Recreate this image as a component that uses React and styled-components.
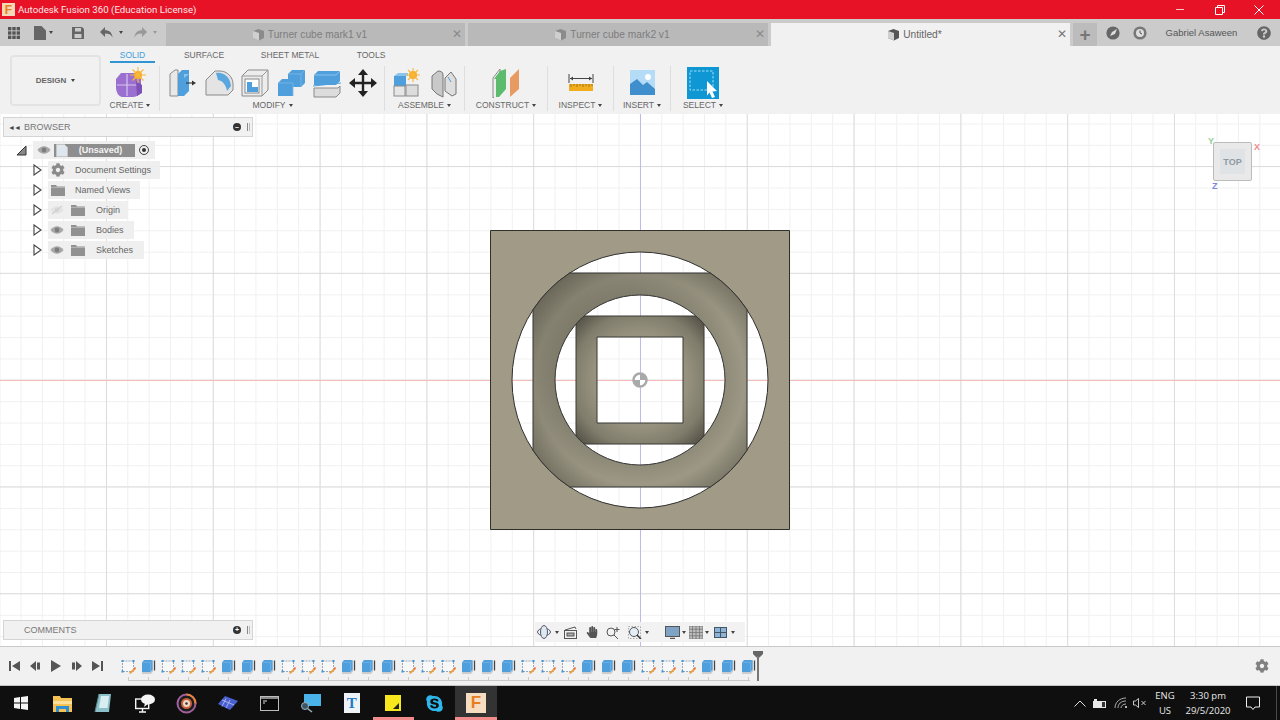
import React from 'react'
import styled, { createGlobalStyle } from 'styled-components'
import { FaCog, FaSkype, FaHandPaper, FaQuestionCircle } from 'react-icons/fa'

const GlobalStyle = createGlobalStyle`
  html, body { margin: 0; padding: 0; height: 100%; overflow: hidden; }
  body { font-family: "Liberation Sans", Arial, sans-serif; }
  #root { height: 100%; }
  svg { display: block; flex: none; }
`

const Page = styled.div`
  width: 1280px;
  height: 720px;
  display: flex;
  flex-direction: column;
  background: #fff;
  overflow: hidden;
`

/* title bar */
const TitleBar = styled.header`
  height: 19px;
  flex: none;
  display: flex;
  align-items: center;
  padding-right: 2px;
  background: #e81226;
  color: #fbe6e8;
  font-family: "Roboto", sans-serif;
  font-size: 9.7px;
`
const AppLogo = styled.span`
  width: ${p => p.$size || 13}px;
  height: ${p => p.$size || 13}px;
  margin: ${p => (p.$size ? '0' : '0 3px 0 2px')};
  display: flex;
  align-items: center;
  justify-content: center;
  background: ${p => p.$bg || '#f6d9b8'};
  color: #e67e22;
  font: bold ${p => (p.$size ? 17 : 12)}px "Liberation Sans", sans-serif;
`
const TitleText = styled.span`
  flex: 1;
`
const WinButton = styled.span`
  width: 39px;
  display: flex;
  justify-content: center;
`

/* document tabs */
const TabBar = styled.div`
  height: 27px;
  flex: none;
  display: flex;
  align-items: flex-end;
  background: #cbcbcb;
`
const QuickBar = styled.div`
  width: 166px;
  height: 27px;
  display: flex;
  align-items: center;
`
const QuickSlot = styled.span`
  width: ${p => p.$w}px;
  display: flex;
  align-items: center;
  justify-content: center;
`
const Caret = styled.i`
  display: inline-block;
  width: 0;
  height: 0;
  flex: none;
  margin-left: ${p => p.$gap ?? 3}px;
  border-left: 2.5px solid transparent;
  border-right: 2.5px solid transparent;
  border-top: 3px solid ${p => p.$color || '#444'};
`
const Tab = styled.div`
  width: ${p => p.$w}px;
  height: 23px;
  margin-right: ${p => p.$mr}px;
  box-sizing: border-box;
  padding-right: 12px;
  position: relative;
  display: flex;
  align-items: center;
  justify-content: center;
  gap: 3px;
  background: ${p => (p.$active ? '#f1f1f1' : '#b9b9b9')};
  color: ${p => (p.$active ? '#666' : '#7d7d7d')};
  font-size: 10.2px;
`
const TabClose = styled.span`
  position: absolute;
  right: 3px;
  top: 4px;
  font-size: 12px;
  color: ${p => (p.$active ? '#777' : '#8a8a8a')};
`
const PlusTab = styled.div`
  width: 24px;
  height: 23px;
  margin-left: 3px;
  display: flex;
  align-items: center;
  justify-content: center;
  background: #bcbcbc;
  color: #777;
  font-size: 19px;
  font-weight: bold;
`
const TopIcon = styled.span`
  width: 27px;
  height: 27px;
  display: flex;
  align-items: center;
  justify-content: center;
  margin-left: ${p => p.$ml || 0}px;
`
const UserName = styled.span`
  width: 97px;
  height: 27px;
  display: flex;
  align-items: center;
  justify-content: center;
  color: #555;
  font-size: 9.5px;
`

/* ribbon */
const Ribbon = styled.div`
  height: 68px;
  flex: none;
  display: flex;
  background: #f1f1f1;
  box-sizing: border-box;
  padding: 0 0 0 10px;
`
const DesignButton = styled.div`
  width: 91px;
  height: 51px;
  margin-top: 9px;
  box-sizing: border-box;
  display: flex;
  align-items: center;
  justify-content: center;
  border: 2px solid #e3e3e3;
  border-radius: 4px;
  color: #666;
  font-size: 8px;
  font-weight: bold;
`
const RibbonBody = styled.div`
  margin-left: 9px;
  display: flex;
  flex-direction: column;
`
const RibbonTabs = styled.div`
  height: 17px;
  margin-top: 3px;
  display: flex;
`
const RibbonTab = styled.span`
  width: ${p => p.$w}px;
  height: 14px;
  box-sizing: border-box;
  text-align: center;
  font-size: 8.5px;
  line-height: 12px;
  color: ${p => (p.$active ? '#3f9fd8' : '#666')};
  border-bottom: ${p => (p.$active ? '2px solid #2f95d3' : 'none')};
`
const RibbonGroups = styled.div`
  display: flex;
  height: 45px;
`
const Group = styled.div`
  width: ${p => p.$w}px;
  box-sizing: border-box;
  padding: 0 ${p => p.$pr || 0}px 0 ${p => p.$pl || 0}px;
  display: flex;
  flex-direction: column;
  align-items: center;
  border-right: ${p => (p.$last ? 'none' : '1px solid #dedede')};
`
const GroupIcons = styled.div`
  height: 33px;
  display: flex;
  align-items: center;
  gap: ${p => p.$gap || 0}px;
`
const GroupLabel = styled.span`
  display: flex;
  align-items: center;
  margin-top: 1px;
  color: #666;
  font-size: 8.5px;
  line-height: 11px;
`

/* canvas */
const Viewport = styled.main`
  flex: 1;
  position: relative;
  background-color: #fff;
  background-image:
    linear-gradient(#f6bcbc, #f6bcbc),
    linear-gradient(#bcbcec, #bcbcec),
    linear-gradient(to right, #dcdcdc 1px, transparent 1px),
    linear-gradient(to bottom, #dcdcdc 1px, transparent 1px),
    linear-gradient(to right, #f0f0f0 1px, transparent 1px),
    linear-gradient(to bottom, #f0f0f0 1px, transparent 1px);
  background-repeat: no-repeat, no-repeat, repeat, repeat, repeat, repeat;
  background-size: 100% 1px, 1px 100%, 106.8px 106.8px, 106.8px 106.8px, 21.36px 21.36px, 21.36px 21.36px;
  background-position: 0 266px, 640px 0, 106px 0, 0 52px, 20.5px 0, 0 9.5px;
`
const Model = styled.svg`
  position: absolute;
  left: 490px;
  top: 116px;
  overflow: visible;
`
const SidePanels = styled.div`
  position: absolute;
  left: 3px;
  top: 3px;
  bottom: 6px;
  width: 250px;
  display: flex;
  flex-direction: column;
  justify-content: space-between;
`
const PanelHeader = styled.div`
  height: 20px;
  box-sizing: border-box;
  display: flex;
  align-items: center;
  background: #f1f1f1;
  border: 1px solid #d4d4d4;
  color: #777;
  font-size: 9px;
`
const PanelArrows = styled.span`
  width: 20px;
  text-align: center;
  font-size: 7px;
  letter-spacing: -1px;
  color: #444;
`
const PanelTitle = styled.span`
  flex: 1;
`
const PanelDot = styled.span`
  width: 8px;
  height: 8px;
  border-radius: 50%;
  background: #333;
  color: #fff;
  display: flex;
  align-items: center;
  justify-content: center;
  font-size: 7px;
  line-height: 8px;
  font-weight: bold;
`
const PanelGrip = styled.span`
  width: 1px;
  height: 8px;
  margin: 0 2px 0 6px;
  border-left: 1px solid #888;
  border-right: 1px solid #bbb;
`
const Tree = styled.div`
  display: flex;
  flex-direction: column;
  margin-top: 3px;
`
const TreeRow = styled.div`
  height: 20px;
  display: flex;
  align-items: center;
  padding-left: ${p => p.$indent}px;
`
const TreeTwist = styled.span`
  width: ${p => p.$w}px;
  display: flex;
  align-items: center;
`
const TreePill = styled.div`
  height: 18px;
  width: ${p => p.$w}px;
  display: flex;
  align-items: center;
  background: rgba(238, 238, 238, 0.92);
  color: #666;
  font-size: 9px;
  white-space: nowrap;
`
const IconSlot = styled.span`
  width: ${p => p.$w}px;
  display: flex;
  justify-content: center;
  align-items: center;
`
const RootLabel = styled.div`
  width: 81px;
  height: 13px;
  display: flex;
  align-items: center;
  background: #8e8e8e;
  color: #f4f4f4;
  font-size: 9px;
  font-weight: bold;
`
const RootText = styled.span`
  flex: 1;
  text-align: center;
  padding-right: 4px;
`
const ActiveRadio = styled.span`
  width: 10px;
  height: 10px;
  margin-left: 4px;
  box-sizing: border-box;
  border: 1px solid #444;
  border-radius: 50%;
  display: flex;
  align-items: center;
  justify-content: center;
  &::before {
    content: "";
    width: 4px;
    height: 4px;
    border-radius: 50%;
    background: #333;
  }
`
const TreeLabel = styled.span`
  margin-left: ${p => p.$ml}px;
`
const ViewCube = styled.div`
  position: absolute;
  left: 1213px;
  top: 28px;
  width: 39px;
  height: 39px;
  box-sizing: border-box;
  display: flex;
  align-items: center;
  justify-content: center;
  background: #e9e9e9;
  border: 1px solid #bcbcbc;
  border-radius: 2px;
`
const CubeFace = styled.span`
  width: 25px;
  height: 25px;
  display: flex;
  align-items: center;
  justify-content: center;
  background: #dfe3e6;
  color: #8f9aa3;
  font-size: 9px;
  font-weight: bold;
`
const CubeAxis = styled.span`
  position: absolute;
  left: ${p => p.$x}px;
  top: ${p => p.$y}px;
  color: ${p => p.$color};
  font-size: 9px;
  font-weight: bold;
`
const NavBar = styled.div`
  position: absolute;
  left: 535px;
  bottom: 4px;
  width: 210px;
  height: 20px;
  display: flex;
  align-items: center;
  background: rgba(241, 241, 241, 0.95);
`
const NavItem = styled.span`
  width: ${p => p.$w}px;
  margin-left: ${p => p.$ml || 0}px;
  display: flex;
  align-items: center;
  justify-content: center;
`

/* timeline */
const Timeline = styled.div`
  height: 40px;
  flex: none;
  box-sizing: border-box;
  display: flex;
  align-items: center;
  background: #f1f1f1;
  border-top: 1px solid #c9c9c9;
  border-bottom: 1px solid #c4c4c4;
`
const Transport = styled.div`
  width: 118px;
  padding-left: 4px;
  box-sizing: border-box;
  display: flex;
`
const TransportButton = styled.span`
  width: 20.8px;
  display: flex;
  justify-content: center;
`
const Steps = styled.div`
  display: flex;
  height: 38px;
  padding-top: 1px;
  box-sizing: border-box;
`
const Step = styled.div`
  width: 20px;
  height: 33px;
  box-sizing: border-box;
  position: relative;
  padding-top: 11px;
  display: flex;
  justify-content: center;
  &::before {
    content: "";
    position: absolute;
    left: 0;
    right: 0;
    bottom: 0;
    height: 1px;
    background: #c9c9c9;
  }
  &:first-child::before { left: 50%; }
  &:last-child::before { right: 40%; }
  &::after {
    content: "";
    position: absolute;
    left: 50%;
    bottom: 0;
    width: 1px;
    height: 4px;
    background: #c9c9c9;
  }
`
const Marker = styled.svg`
  margin-left: -5px;
`
const TimelineGear = styled.span`
  margin-left: auto;
  margin-right: 11px;
  color: #808080;
  display: flex;
`

/* windows taskbar */
const Taskbar = styled.footer`
  height: 34px;
  flex: none;
  display: flex;
  background: #0f0f0f;
`
const TaskSlot = styled.span`
  width: 41.4px;
  height: 34px;
  box-sizing: border-box;
  display: flex;
  align-items: center;
  justify-content: center;
  background: ${p => (p.$active ? '#333' : 'transparent')};
  border-bottom: 3px solid ${p => (p.$open ? '#f28b8b' : 'transparent')};
  padding-top: 3px;
`
const Tray = styled.div`
  margin-left: auto;
  display: flex;
  padding-right: 3px;
  color: #e8e8e8;
  font-family: "Open Sans", sans-serif;
  font-size: 9.5px;
  line-height: 15px;
`
const TraySlot = styled.span`
  width: ${p => p.$w}px;
  height: 34px;
  display: flex;
  flex-direction: column;
  align-items: center;
  justify-content: center;
  white-space: nowrap;
  border-right: ${p => (p.$edge ? '1px solid #4a4a4a' : 'none')};
  box-sizing: border-box;
`

/* icons drawn by hand */
const Cube = ({ color = '#8b8b8b' }) => (
  <svg width="13" height="13" viewBox="0 0 13 13">
    <path d="M1 3l5.500-2L12 3v7l-5 2.500L1 10z" fill={color} />
    <path d="M1 3l6 2v7.500L1 10z" fill="#cfcfcf" />
  </svg>
)
const GridIcon = () => (
  <svg width="12" height="12" viewBox="0 0 12 12" fill="#555">
    {[0, 4.3, 8.6].flatMap(y => [0, 4.3, 8.6].map(x => <rect key={x + '-' + y} x={x} y={y} width="3.4" height="3.4" />))}
  </svg>
)
const FileIcon = () => (
  <svg width="12" height="14" viewBox="0 0 12 14"><path d="M0 0h7.500L12 4.500V14H0z" fill="#666" /></svg>
)
const SaveIcon = () => (
  <svg width="12" height="12" viewBox="0 0 12 12">
    <path d="M0 0h10l2 2v10H0z" fill="#666" />
    <rect x="3" y="1" width="6" height="3.500" fill="#cbcbcb" />
    <rect x="2.500" y="7" width="7" height="4" fill="#cbcbcb" />
  </svg>
)
const UndoIcon = () => (
  <svg width="13" height="11" viewBox="0 0 13 11">
    <path d="M5 0v3.200c4.500 0 7.200 2.500 7.500 7.300C11 7.600 8.800 6.600 5 6.600V10L0 5z" fill="#666" />
  </svg>
)
const RedoIcon = () => (
  <svg width="13" height="11" viewBox="0 0 13 11">
    <path d="M8 0v3.200C3.500 3.200.8 5.700.5 10.500 2 7.600 4.200 6.600 8 6.600V10l5-5z" fill="#999" />
  </svg>
)
const RoundIcon = ({ children, bg = '#666' }) => (
  <svg width="14" height="14" viewBox="0 0 14 14">
    <circle cx="7" cy="7" r="6.600" fill={bg} />
    {children}
  </svg>
)
const Eye = ({ off }) => (
  <svg width="14" height="10" viewBox="0 0 14 10">
    <path d="M0.500 5C4 0 10 0 13.500 5 10 10 4 10 .5 5z" fill={off ? '#e4e4e4' : '#a8a8a8'} />
    <circle cx="7" cy="5" r="2.400" fill={off ? '#d8d8d8' : '#7d7d7d'} />
    {off && <path d="M2 9L12 1" stroke="#d0d0d0" strokeWidth="1.200" />}
  </svg>
)
const Folder = () => (
  <svg width="14" height="11" viewBox="0 0 14 11">
    <path d="M0 0h5l1 1.600h8V11H0z" fill="#919191" />
    <path d="M0 2.400h14" stroke="#c9c9c9" strokeWidth=".7" />
  </svg>
)
const Twist = () => (
  <svg width="9" height="12" viewBox="0 0 9 12">
    <path d="M1 1l7 5-7 5z" fill="#fff" stroke="#444" strokeWidth="1.100" />
  </svg>
)
const DocIcon = () => (
  <svg width="12" height="13" viewBox="0 0 12 13">
    <path d="M.5.5h8l3 3v9H.5z" fill="#dfe7ee" stroke="#c5c5c5" />
  </svg>
)

const CreateIcon = () => (
  <svg width="32" height="32" viewBox="0 0 32 32">
    <path d="M7 6h15l5 6v13c-3 5-7 5-11 5H8c-4-1-6-5-6-10v-8z" fill="#9a6fd0" />
    <path d="M3 18h21M13 7v22" stroke="#d8c6ee" strokeWidth="1.200" />
    <path d="M22 14l6 4v8l-5 3z" fill="#7d51b5" />
    <circle cx="24" cy="8" r="4" fill="#f7a823" />
    <path d="M24 0v16M16 8h16M18.500 2.500l11 11M29.500 2.500l-11 11" stroke="#f7b93a" strokeWidth="1.100" />
  </svg>
)
const PressPull = () => (
  <svg width="30" height="30" viewBox="0 0 30 30">
    <path d="M2 6l5-4h3v26H2z" fill="#e8e8e8" stroke="#8a8a8a" />
    <path d="M10 28V6l4-4h7v21l-5 5z" fill="#4f9fdc" />
    <path d="M16 6h5l-5 4z" fill="#8cc4ec" />
    <path d="M18 15h7" stroke="#333" strokeWidth="1.100" />
    <path d="M24 12.500l4 2.500-4 2.500z" fill="#333" />
  </svg>
)
const FilletIcon = () => (
  <svg width="30" height="30" viewBox="0 0 30 30">
    <path d="M2 27V12l9-9h5c7 0 13 6 13 13v6l-5 5z" fill="#e4e4e4" stroke="#8a8a8a" />
    <path d="M12 5c8-1 14 4 15 13l-4 5c-1-6-4-10-9-11z" fill="#5aa6df" />
  </svg>
)
const ShellIcon = () => (
  <svg width="30" height="30" viewBox="0 0 30 30">
    <path d="M2 8l6-6h20v20l-6 6H2z" fill="#ececec" stroke="#8a8a8a" />
    <path d="M2 8h20v20M22 8l6-6" fill="none" stroke="#9a9a9a" />
    <rect x="5" y="11" width="14" height="14" fill="#fff" stroke="#888" />
    <path d="M7 24V14h5v5h6v5z" fill="#4f9fdc" />
  </svg>
)
const CombineIcon = () => (
  <svg width="30" height="30" viewBox="0 0 30 30">
    <path d="M12 6l4-4h13v13l-4 4h-8v9l-1 0H2V15l4-4h6z" fill="#4f9fdc" />
    <path d="M12 6h13v13M25 6l4-4" fill="none" stroke="#7db8e6" strokeWidth=".8" />
    <path d="M2 15h15v13" fill="none" stroke="#7db8e6" strokeWidth=".8" />
  </svg>
)
const SplitIcon = () => (
  <svg width="30" height="30" viewBox="0 0 30 30">
    <path d="M2 7l4-4h22v10l-4 4H2z" fill="#4f9fdc" />
    <path d="M2 7h22l4-4" fill="none" stroke="#8cc4ec" />
    <path d="M1 18l28-3" stroke="#4f9fdc" strokeWidth="1" />
    <path d="M2 20h24l2-2v7l-4 4H2z" fill="#dcdcdc" stroke="#8a8a8a" />
  </svg>
)
const MoveIcon = () => (
  <svg width="30" height="30" viewBox="0 0 30 30" fill="#222">
    <path d="M15 1l5 6h-3.800v6.800H23V10l6 5-6 5v-3.800h-6.800V23H20l-5 6-5-6h3.800v-6.800H7V20l-6-5 6-5v3.800h6.800V7H10z" />
  </svg>
)
const NewComponent = () => (
  <svg width="30" height="30" viewBox="0 0 30 30">
    <rect x="2" y="8" width="12" height="10" fill="#4f9fdc" />
    <path d="M2 8l4-3h10v3z" fill="#8cc4ec" />
    <rect x="2" y="18" width="11" height="10" fill="#e6e6e6" stroke="#8a8a8a" />
    <rect x="14" y="17" width="12" height="11" fill="#dcdcdc" stroke="#8a8a8a" />
    <circle cx="21" cy="7" r="4" fill="#f7a823" />
    <path d="M21 0v14M14 7h14M16 2l10 10M26 2L16 12" stroke="#f7b93a" strokeWidth="1.100" />
  </svg>
)
const JointIcon = () => (
  <svg width="28" height="30" viewBox="0 0 28 30">
    <path d="M2 8l6-5c3 0 5 1 5 4v22l-6-3-5-5z" fill="#c9c9c9" stroke="#777" />
    <path d="M15 10l6-6 5 7v15l-4 2-7-5z" fill="#dedede" stroke="#777" />
    <path d="M18 9l3 5" stroke="#4f9fdc" />
  </svg>
)
const ConstructIcon = () => (
  <svg width="30" height="32" viewBox="0 0 30 32">
    <path d="M2 11l7-9v21l-7 8z" fill="#f1f1f1" stroke="#8a8a8a" />
    <path d="M3 30V12l6-8 6-2v20l-7 8z" fill="#5cbb6c" />
    <path d="M3 30V12h2v18z" fill="#efefef" />
    <path d="M19 30V11l9-9v20z" fill="#e89a63" />
  </svg>
)
const InspectIcon = () => (
  <svg width="26" height="22" viewBox="0 0 26 22">
    <path d="M1 2v9M25 2v9" stroke="#444" />
    <path d="M2 6.500h22" stroke="#444" />
    <path d="M2 6.500l3-2v4zM24 6.500l-3-2v4z" fill="#444" />
    <rect x="1" y="12" width="24" height="7" fill="#f2ad1e" />
    <path d="M3 12v3M6 12v2M9 12v3M12 12v2M15 12v3M18 12v2M21 12v3M24 12v2" stroke="#8a6a1c" strokeWidth=".8" />
  </svg>
)
const InsertIcon = () => (
  <svg width="25" height="25" viewBox="0 0 25 25">
    <rect width="25" height="25" fill="#b5dcf7" />
    <circle cx="18" cy="7" r="3" fill="#fff" />
    <path d="M0 25V14l7-5 6 6 4-3 8 7v6z" fill="#3e8fcb" />
  </svg>
)
const SelectIcon = () => (
  <svg width="32" height="32" viewBox="0 0 32 32">
    <rect width="32" height="32" fill="#0f97d4" />
    <rect x="3" y="4" width="23" height="19" fill="none" stroke="#9fe0f2" strokeDasharray="2.500 1.500" />
    <path d="M20 14l10 10-4.500.5L28 30l-3 1-2.500-5.500-2.500 3z" fill="#fff" />
  </svg>
)

const SketchStep = () => (
  <svg width="15" height="15" viewBox="0 0 15 15">
    <rect x="1.500" y="2" width="11" height="10.500" fill="#f8f8f8" stroke="#8f9fb0" strokeWidth=".9" strokeDasharray="2 1" />
    <path d="M0.500 1h2v2h-2zM11.500 1h2v2h-2zM0.500 11.500h2v2h-2z" fill="#3d93d8" />
    <path d="M8 14l5-5 1.500 1.500-5 4.500z" fill="#f0a040" />
    <path d="M12.800 9.200l1.200-1.200 1 1-1 1.500z" fill="#e25c3a" />
  </svg>
)
const BodyStep = () => (
  <svg width="15" height="15" viewBox="0 0 15 15">
    <path d="M1 5l2-3h9v10.500L10 15H1z" fill="#c9cdd0" />
    <path d="M1 3.500L3 1h8.500v9.500L9.500 13H1z" fill="#4f9fdc" />
    <path d="M1 3.500h8.500v9.500M9.500 3.500l2-2.500" fill="none" stroke="#7db8e6" strokeWidth=".6" />
    <path d="M13.500 1.500v10" stroke="#444" strokeWidth="1.300" />
  </svg>
)

const TransportIcon = ({ d }) => (
  <svg width="11" height="12" viewBox="0 0 11 12"><path d={d} fill="#555" /></svg>
)
const WinLogo = () => (
  <svg width="14" height="14" viewBox="0 0 14 14" fill="#f4f4f4">
    <path d="M0 2l6-.9V6.600H0zM7 1l7-1v6.600H7zM0 7.400h6v5.500l-6-.9zM7 7.400h7V14l-7-1z" />
  </svg>
)
const ExplorerIcon = () => (
  <svg width="19" height="17" viewBox="0 0 19 17">
    <path d="M0 1h7l1 2h11v14H0z" fill="#f5c253" />
    <path d="M0 6h19v3H0z" fill="#fbe09a" />
    <path d="M3 17v-6h13v6h-3v-3H6v3z" fill="#2f8fd0" />
  </svg>
)
const NoteIcon = () => (
  <svg width="18" height="20" viewBox="0 0 18 20">
    <path d="M5 1h12l-2 18H1z" fill="#8cc0c8" />
    <path d="M7 3h8l-1.500 12H5z" fill="#d8eef0" />
    <path d="M1 19l4-18" stroke="#5a8a92" />
  </svg>
)
const ChatMonitor = () => (
  <svg width="20" height="19" viewBox="0 0 20 19">
    <rect x=".7" y="5" width="13" height="9.500" fill="none" stroke="#f4f4f4" strokeWidth="1.400" />
    <path d="M4 18h7M7.500 14v4" stroke="#f4f4f4" strokeWidth="1.400" />
    <ellipse cx="13" cy="5.500" rx="7" ry="5" fill="#f4f4f4" />
    <path d="M10 9l-1 4 4-3z" fill="#f4f4f4" />
  </svg>
)
const DiscIcon = () => (
  <svg width="21" height="21" viewBox="0 0 21 21">
    <circle cx="10.500" cy="10.500" r="9" fill="#1c1c1c" stroke="#a0609e" strokeWidth="2" />
    <path d="M10.500 1.500a9 9 0 0 1 9 9" fill="none" stroke="#e8853a" strokeWidth="2" />
    <circle cx="10.500" cy="10.500" r="4.500" fill="#f0d9c8" stroke="#c8603a" strokeWidth="2" />
    <circle cx="10.500" cy="10.500" r="1.300" fill="#333" />
  </svg>
)
const PanelIcon = () => (
  <svg width="20" height="14" viewBox="0 0 20 14">
    <path d="M7 0l13 5-8 9L0 8z" fill="#4a5fd0" />
    <path d="M4 4l12 5M8 2.500l-4 8M12 4l-4 8" stroke="#b8c4f2" strokeWidth=".8" />
  </svg>
)
const TerminalIcon = () => (
  <svg width="19" height="15" viewBox="0 0 19 15">
    <rect x=".5" y=".5" width="18" height="14" fill="#0a0a0a" stroke="#bdbdbd" />
    <rect x="1" y="1" width="17" height="2" fill="#8a8a8a" />
    <path d="M3 5h4M3 7h2" stroke="#ddd" />
  </svg>
)
const SearchMonitor = () => (
  <svg width="21" height="20" viewBox="0 0 21 20">
    <rect x="4" y="1" width="17" height="12" fill="#49b3ea" />
    <circle cx="5" cy="13" r="3.500" fill="#3a5564" stroke="#9cb4c0" />
    <path d="M7.500 15.500L12 19" stroke="#9cb4c0" strokeWidth="1.500" />
  </svg>
)
const TDoc = styled.span`
  width: 16px;
  height: 20px;
  display: flex;
  align-items: center;
  justify-content: center;
  background: #eef3f8;
  color: #1a7bc9;
  font: bold 15px "Liberation Serif", serif;
`
const StickyIcon = () => (
  <svg width="16" height="16" viewBox="0 0 16 16">
    <rect width="16" height="16" fill="#f8e71c" />
    <path d="M8 14l6-6v6z" fill="#222" />
  </svg>
)
const TrayBattery = () => (
  <svg width="14" height="9" viewBox="0 0 14 9">
    <rect x="0" y="2" width="13" height="7" fill="#e8e8e8" />
    <rect x="1" y="0" width="3" height="2" fill="#e8e8e8" />
    <rect x="9" y="3" width="3" height="5" fill="#333" />
  </svg>
)
const TrayWifi = () => (
  <svg width="14" height="12" viewBox="0 0 14 12" fill="none" stroke="#bdbdbd" strokeWidth=".9">
    <path d="M1 11C1 5 6 1 12 1M4 11c0-4 3-7 8-7M7 11c0-2 2-4 5-4" />
    <circle cx="12" cy="10" r="1" fill="#eee" stroke="none" />
  </svg>
)
const TrayVolume = () => (
  <svg width="14" height="10" viewBox="0 0 14 10" fill="none" stroke="#dcdcdc" strokeWidth=".9">
    <path d="M.5 3h2l3-2.500v9l-3-2.500h-2zM8.500 3l4 4M12.500 3l-4 4" />
  </svg>
)

// sketch, body, then three of each all the way along
const stepKinds = Array.from({ length: 32 }, (_, i) => {
  if (i < 2) return i === 0 ? 'S' : 'B'
  return (i - 2) % 6 < 3 ? 'S' : 'B'
})

const trees = [
  { key: 'doc', w: 112, icon: <IconSlot $w={19}><FaCog size={14} color="#8a8a8a" /></IconSlot>, label: 'Document Settings', ml: 8 },
  { key: 'views', w: 92, icon: <IconSlot $w={19}><Folder /></IconSlot>, label: 'Named Views', ml: 8 },
  { key: 'origin', w: 80, off: true, label: 'Origin' },
  { key: 'bodies', w: 86, label: 'Bodies' },
  { key: 'sketches', w: 96, label: 'Sketches' },
]

const CIRCLE_OUT = 128
const CIRCLE_MID = 85
const cx = 150

// square with its corners cut by a circle of radius r
const cutSquare = (a, r) => {
  const b = Math.sqrt(r * r - a * a)
  return `M${cx - b} ${cx - a}H${cx + b}A${r} ${r} 0 0 1 ${cx + a} ${cx - b}V${cx + b}A${r} ${r} 0 0 1 ${cx + b} ${cx + a}H${cx - b}A${r} ${r} 0 0 1 ${cx - a} ${cx + b}V${cx - b}A${r} ${r} 0 0 1 ${cx - b} ${cx - a}Z`
}
const circlePath = r => `M${cx - r} ${cx}A${r} ${r} 0 1 0 ${cx + r} ${cx}A${r} ${r} 0 1 0 ${cx - r} ${cx}Z`
const squarePath = a => `M${cx - a} ${cx - a}H${cx + a}V${cx + a}H${cx - a}Z`

const TurnerCube = () => (
  <Model width="300" height="300" viewBox="0 0 300 300">
    <defs>
      <radialGradient id="midShade" gradientUnits="userSpaceOnUse" cx="150" cy="150" r="128">
        <stop offset="0.66" stopColor="#8f8b79" />
        <stop offset="0.82" stopColor="#9d9885" />
        <stop offset="1" stopColor="#7d7a6a" />
      </radialGradient>
      <linearGradient id="midTilt" gradientUnits="userSpaceOnUse" x1="40" y1="60" x2="260" y2="240">
        <stop offset="0" stopColor="#3a382f" stopOpacity=".3" />
        <stop offset="0.65" stopColor="#3a382f" stopOpacity="0" />
      </linearGradient>
      <radialGradient id="innerShade" gradientUnits="userSpaceOnUse" cx="150" cy="150" r="85">
        <stop offset="0.55" stopColor="#97927f" />
        <stop offset="0.8" stopColor="#7f7c6b" />
        <stop offset="1" stopColor="#57554a" />
      </radialGradient>
    </defs>
    <path d={`${squarePath(149.5)}${circlePath(CIRCLE_OUT)}`} fillRule="evenodd" fill="#a09a87" stroke="#2f2f2c" strokeWidth="1" />
    <path d={`${cutSquare(107, CIRCLE_OUT)}${circlePath(CIRCLE_MID)}`} fillRule="evenodd" fill="url(#midShade)" stroke="#333" strokeWidth="1" />
    <path d={`${cutSquare(107, CIRCLE_OUT)}${circlePath(CIRCLE_MID)}`} fillRule="evenodd" fill="url(#midTilt)" />
    <path d={`${cutSquare(64, CIRCLE_MID)}${squarePath(43)}`} fillRule="evenodd" fill="url(#innerShade)" stroke="#3a3a36" strokeWidth="1" />
    <circle cx="150" cy="150" r="6.500" fill="#fff" stroke="#a9a9a9" strokeWidth="2.500" />
    <path d="M150 150V144a6 6 0 0 1 6 6zM150 150v6a6 6 0 0 1-6-6z" fill="#a9a9a9" />
  </Model>
)

export default function App() {
  return (
    <Page>
      <GlobalStyle />
      <TitleBar>
        <AppLogo>F</AppLogo>
        <TitleText>Autodesk Fusion 360 (Education License)</TitleText>
        <WinButton><svg width="9" height="9" viewBox="0 0 9 9"><path d="M0 4.500h8" stroke="#f8c8cc" /></svg></WinButton>
        <WinButton><svg width="10" height="10" viewBox="0 0 10 10" fill="none" stroke="#fff"><path d="M.5 2.500h7v7h-7zM2.500 2.500v-2h7v7h-2" /></svg></WinButton>
        <WinButton><svg width="10" height="10" viewBox="0 0 10 10"><path d="M.5.5l9 9M9.500.5l-9 9" stroke="#fff" /></svg></WinButton>
      </TitleBar>

      <TabBar>
        <QuickBar>
          <QuickSlot $w={28}><GridIcon /></QuickSlot>
          <QuickSlot $w={30}><FileIcon /><Caret /></QuickSlot>
          <QuickSlot $w={40}><SaveIcon /></QuickSlot>
          <QuickSlot $w={26}><UndoIcon /><Caret $gap={6} /></QuickSlot>
          <QuickSlot $w={42}><RedoIcon /><Caret $gap={6} $color="#999" /></QuickSlot>
        </QuickBar>
        <Tab $w={299} $mr={3}><Cube />Turner cube mark1 v1<TabClose>✕</TabClose></Tab>
        <Tab $w={300} $mr={3}><Cube />Turner cube mark2 v1<TabClose>✕</TabClose></Tab>
        <Tab $w={299} $mr={0} $active><Cube color="#555" />Untitled*<TabClose $active>✕</TabClose></Tab>
        <PlusTab>+</PlusTab>
        <TopIcon $ml={2}>
          <RoundIcon><path d="M4 10l2-4 5-3-2 5z" fill="#ddd" /></RoundIcon>
        </TopIcon>
        <TopIcon>
          <RoundIcon bg="#777"><circle cx="7" cy="7" r="4" fill="#ddd" /><path d="M7 4.500V7l2 1" stroke="#555" fill="none" /></RoundIcon>
        </TopIcon>
        <UserName>Gabriel Asaween</UserName>
        <TopIcon><FaQuestionCircle size={14} color="#666" /></TopIcon>
      </TabBar>

      <Ribbon>
        <DesignButton>DESIGN<Caret $gap={5} /></DesignButton>
        <RibbonBody>
          <RibbonTabs>
            <RibbonTab $w={45} $active>SOLID</RibbonTab>
            <RibbonTab $w={98}>SURFACE</RibbonTab>
            <RibbonTab $w={74}>SHEET METAL</RibbonTab>
            <RibbonTab $w={88}>TOOLS</RibbonTab>
          </RibbonTabs>
          <RibbonGroups>
            <Group $w={50} $pr={9}>
              <GroupIcons><CreateIcon /></GroupIcons>
              <GroupLabel>CREATE<Caret /></GroupLabel>
            </Group>
            <Group $w={225} $pl={1}>
              <GroupIcons $gap={6}>
                <PressPull /><FilletIcon /><ShellIcon /><CombineIcon /><SplitIcon /><MoveIcon />
              </GroupIcons>
              <GroupLabel>MODIFY<Caret /></GroupLabel>
            </Group>
            <Group $w={80}>
              <GroupIcons $gap={8}><NewComponent /><JointIcon /></GroupIcons>
              <GroupLabel>ASSEMBLE<Caret /></GroupLabel>
            </Group>
            <Group $w={83}>
              <GroupIcons><ConstructIcon /></GroupIcons>
              <GroupLabel>CONSTRUCT<Caret /></GroupLabel>
            </Group>
            <Group $w={66}>
              <GroupIcons><InspectIcon /></GroupIcons>
              <GroupLabel>INSPECT<Caret /></GroupLabel>
            </Group>
            <Group $w={57}>
              <GroupIcons><InsertIcon /></GroupIcons>
              <GroupLabel>INSERT<Caret /></GroupLabel>
            </Group>
            <Group $w={64} $last>
              <GroupIcons><SelectIcon /></GroupIcons>
              <GroupLabel>SELECT<Caret /></GroupLabel>
            </Group>
          </RibbonGroups>
        </RibbonBody>
      </Ribbon>

      <Viewport>
        <TurnerCube />
        <SidePanels>
          <div>
            <PanelHeader>
              <PanelArrows>◄◄</PanelArrows>
              <PanelTitle>BROWSER</PanelTitle>
              <PanelDot>–</PanelDot>
              <PanelGrip />
            </PanelHeader>
            <Tree>
              <TreeRow $indent={13}>
                <TreeTwist $w={17}>
                  <svg width="11" height="11" viewBox="0 0 11 11"><path d="M10 1v9H1z" fill="#888" stroke="#333" /></svg>
                </TreeTwist>
                <TreePill $w={122}>
                  <IconSlot $w={21}><Eye /></IconSlot>
                  <RootLabel>
                    <IconSlot $w={16}><DocIcon /></IconSlot>
                    <RootText>(Unsaved)</RootText>
                  </RootLabel>
                  <ActiveRadio />
                </TreePill>
              </TreeRow>
              {trees.map(row => (
                <TreeRow key={row.key} $indent={30}>
                  <TreeTwist $w={15}><Twist /></TreeTwist>
                  <TreePill $w={row.w}>
                    {row.icon || (
                      <>
                        <IconSlot $w={18}><Eye off={row.off} /></IconSlot>
                        <IconSlot $w={23}><Folder /></IconSlot>
                      </>
                    )}
                    <TreeLabel $ml={row.ml || 7}>{row.label}</TreeLabel>
                  </TreePill>
                </TreeRow>
              ))}
            </Tree>
          </div>
          <PanelHeader>
            <PanelArrows />
            <PanelTitle>COMMENTS</PanelTitle>
            <PanelDot>+</PanelDot>
            <PanelGrip />
          </PanelHeader>
        </SidePanels>

        <ViewCube>
          <CubeFace>TOP</CubeFace>
          <CubeAxis $x={-6} $y={-7} $color="#8fd08f">Y</CubeAxis>
          <CubeAxis $x={40} $y={-1} $color="#f08a8a">X</CubeAxis>
          <CubeAxis $x={-2} $y={38} $color="#7a88e0">Z</CubeAxis>
        </ViewCube>

        <NavBar>
          <NavItem $w={26}>
            <svg width="15" height="14" viewBox="0 0 15 14" fill="none" stroke="#556">
              <ellipse cx="7" cy="7" rx="6.500" ry="3.500" />
              <ellipse cx="7" cy="7" rx="3.500" ry="6.500" fill="#dce9f4" />
            </svg>
            <Caret $gap={3} />
          </NavItem>
          <NavItem $w={19}>
            <svg width="13" height="13" viewBox="0 0 13 13" fill="none" stroke="#555">
              <rect x=".5" y="4.500" width="12" height="8" />
              <rect x="3" y="7" width="7" height="3" fill="#aaa" />
              <path d="M1 4l10-3 1 2" />
            </svg>
          </NavItem>
          <NavItem $w={24}><FaHandPaper size={12} color="#555" /></NavItem>
          <NavItem $w={18}>
            <svg width="14" height="13" viewBox="0 0 14 13" fill="none" stroke="#555">
              <circle cx="5" cy="6" r="4" />
              <path d="M8 9l4 4M11 1v5M8.500 3.500h5" />
            </svg>
          </NavItem>
          <NavItem $w={32}>
            <svg width="14" height="13" viewBox="0 0 14 13" fill="none">
              <rect x=".5" y=".5" width="12" height="12" stroke="#aaa" strokeDasharray="1.500 1.500" />
              <circle cx="6" cy="6" r="4.500" stroke="#555" fill="#e3eef6" />
              <path d="M9 9l4 4" stroke="#333" strokeWidth="1.500" />
            </svg>
            <Caret $gap={3} />
          </NavItem>
          <NavItem $w={22} $ml={10}>
            <svg width="15" height="13" viewBox="0 0 15 13">
              <rect x=".5" y=".5" width="14" height="10" fill="#7ea3c4" stroke="#555" />
              <path d="M5 12.500h5" stroke="#555" strokeWidth="1.500" />
            </svg>
            <Caret $gap={2} />
          </NavItem>
          <NavItem $w={24} $ml={1}>
            <svg width="14" height="13" viewBox="0 0 14 13" stroke="#666" fill="#bbb" strokeWidth=".6">
              <rect width="14" height="13" />
              <path d="M3.500 0v13M7 0v13M10.500 0v13M0 3.200h14M0 6.500h14M0 9.800h14" />
            </svg>
            <Caret $gap={2} />
          </NavItem>
          <NavItem $w={26}>
            <svg width="13" height="11" viewBox="0 0 13 11">
              <rect x=".5" y=".5" width="12" height="10" fill="#8db4d6" stroke="#456" />
              <path d="M6.500 0v11M0 5.500h13" stroke="#456" />
            </svg>
            <Caret $gap={4} />
          </NavItem>
        </NavBar>
      </Viewport>

      <Timeline>
        <Transport>
          <TransportButton><TransportIcon d="M0 1h2v10H0zM11 1v10L3 6z" /></TransportButton>
          <TransportButton><TransportIcon d="M0 6l6-5v10zM7 2.500h3v7H7z" /></TransportButton>
          <TransportButton><TransportIcon d="M1 0l10 6-10 6z" /></TransportButton>
          <TransportButton><TransportIcon d="M11 6L5 1v10zM1 2.500h3v7H1z" /></TransportButton>
          <TransportButton><TransportIcon d="M0 1l8 5-8 5zM9 1h2v10H9z" /></TransportButton>
        </Transport>
        <Steps>
          {stepKinds.map((kind, i) => (
            <Step key={i}>{kind === 'S' ? <SketchStep /> : <BodyStep />}</Step>
          ))}
        </Steps>
        <Marker width="11" height="30" viewBox="0 0 11 30">
          <path d="M0 0h10v3l-3.500 3.500h-3L0 3z" fill="#666" />
          <rect x="4" y="5" width="2" height="25" fill="#777" />
        </Marker>
        <TimelineGear><FaCog size={14} /></TimelineGear>
      </Timeline>

      <Taskbar>
        <TaskSlot><WinLogo /></TaskSlot>
        <TaskSlot><ExplorerIcon /></TaskSlot>
        <TaskSlot><NoteIcon /></TaskSlot>
        <TaskSlot><ChatMonitor /></TaskSlot>
        <TaskSlot><DiscIcon /></TaskSlot>
        <TaskSlot><PanelIcon /></TaskSlot>
        <TaskSlot><TerminalIcon /></TaskSlot>
        <TaskSlot><SearchMonitor /></TaskSlot>
        <TaskSlot><TDoc>T</TDoc></TaskSlot>
        <TaskSlot $open><StickyIcon /></TaskSlot>
        <TaskSlot><FaSkype size={19} color="#2fb6ea" /></TaskSlot>
        <TaskSlot $active $open><AppLogo $size={20} $bg="#f6dcc0">F</AppLogo></TaskSlot>
        <Tray>
          <TraySlot $w={20}><svg width="12" height="7" viewBox="0 0 12 7"><path d="M.5 6.500L6 1l5.500 5.500" fill="none" stroke="#ddd" /></svg></TraySlot>
          <TraySlot $w={20}><TrayBattery /></TraySlot>
          <TraySlot $w={21}><TrayWifi /></TraySlot>
          <TraySlot $w={18}><TrayVolume /></TraySlot>
          <TraySlot $w={32}><span>ENG</span><span>US</span></TraySlot>
          <TraySlot $w={54}><span>3:30 pm</span><span>29/5/2020</span></TraySlot>
          <TraySlot $w={36}>
            <svg width="14" height="14" viewBox="0 0 14 14"><path d="M.5 1h13v10H9l-2 2.500L5 11H.5z" fill="none" stroke="#eee" /></svg>
          </TraySlot>
          <TraySlot $w={6} $edge />
        </Tray>
      </Taskbar>
    </Page>
  )
}
